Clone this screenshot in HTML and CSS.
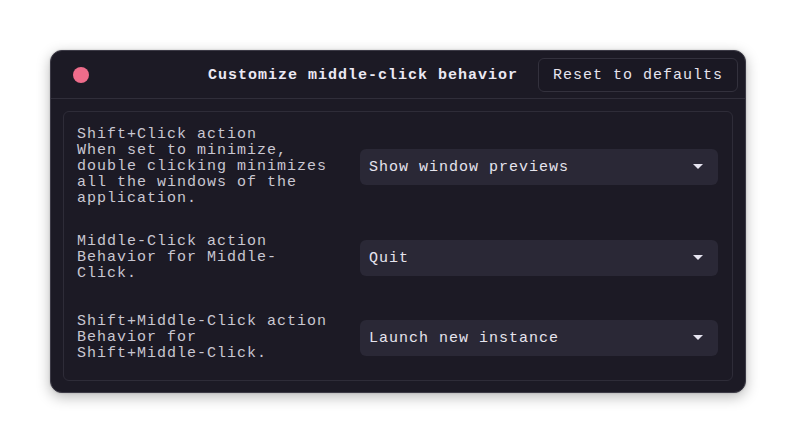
FILE: index.html
```html
<!DOCTYPE html>
<html>
<head>
<meta charset="utf-8">
<link rel="stylesheet" href="styles.css">
</head>
<body>
<div class="window">
  <div class="header">
    <span class="dot"></span>
    <span class="title">Customize middle-click behavior</span>
    <button class="reset">Reset to defaults</button>
  </div>
  <div class="content">
    <div class="frame">
      <div class="row">
        <div class="label">Shift+Click action<br>When set to minimize, double clicking minimizes all the windows of the application.</div>
        <div class="dropdown"><span>Show window previews</span><svg class="arrow" width="10" height="6" viewBox="0 0 10 6"><path d="M0 0H10L5 5Z" fill="#e6e4f0"/></svg></div>
      </div>
      <div class="row">
        <div class="label">Middle-Click action<br>Behavior for Middle-Click.</div>
        <div class="dropdown"><span>Quit</span><svg class="arrow" width="10" height="6" viewBox="0 0 10 6"><path d="M0 0H10L5 5Z" fill="#e6e4f0"/></svg></div>
      </div>
      <div class="row">
        <div class="label">Shift+Middle-Click action<br>Behavior for Shift+Middle-Click.</div>
        <div class="dropdown"><span>Launch new instance</span><svg class="arrow" width="10" height="6" viewBox="0 0 10 6"><path d="M0 0H10L5 5Z" fill="#e6e4f0"/></svg></div>
      </div>
    </div>
  </div>
</div>
</body>
</html>
```
FILE: styles.css
```css
* { box-sizing: border-box; }
html, body { margin: 0; padding: 0; background: #ffffff; }
body {
  padding: 50px;
  font-family: "Liberation Mono", "DejaVu Sans Mono", monospace;
  font-size: 15px;
  letter-spacing: 1px;
  line-height: 16px;
}
.window {
  width: 696px;
  height: 343px;
  background: #1c1a25;
  border: 1px solid #3c3a46;
  border-radius: 12px;
  box-shadow: 0 4px 14px rgba(0, 0, 0, 0.28), 0 0 2px rgba(0, 0, 0, 0.2);
  display: flex;
  flex-direction: column;
}
.header {
  height: 48px;
  border-bottom: 1px solid #302e3a;
  display: flex;
  align-items: center;
  padding: 0 7px 0 22px;
}
.dot {
  width: 16px;
  height: 16px;
  border-radius: 50%;
  background: #ee6c8b;
}
.title {
  margin-left: auto;
  margin-right: 20px;
  color: #ebe9f3;
  font-weight: bold;
  padding-top: 2px;
  white-space: nowrap;
}
.reset {
  height: 34px;
  width: 200px;
  padding: 2px 0 0 14px;
  background: #1a1823;
  border: 1px solid #33313d;
  border-radius: 6px;
  color: #e6e4ee;
  font-family: inherit;
  font-size: inherit;
  letter-spacing: inherit;
  line-height: inherit;
  text-align: left;
  white-space: nowrap;
}
.content {
  flex: 1;
  padding: 12px 12px 11px 12px;
}
.frame {
  height: 270px;
  border: 1px solid #2e2c38;
  border-radius: 6px;
  padding: 14px 14px 0 13px;
}
.row {
  display: flex;
  align-items: center;
  justify-content: space-between;
}
.row + .row { margin-top: 26px; }
.row:last-child { margin-top: 31px; }
.label {
  width: 256px;
  color: #c9c7d2;
  padding-top: 1px;
}
.dropdown {
  width: 358px;
  height: 36px;
  background: #2a2836;
  border-radius: 6px;
  display: flex;
  align-items: center;
  justify-content: space-between;
  padding: 2px 15px 0 9px;
  color: #e6e4ee;
  white-space: nowrap;
}
.arrow { display: block; margin-top: -2px; }
```
